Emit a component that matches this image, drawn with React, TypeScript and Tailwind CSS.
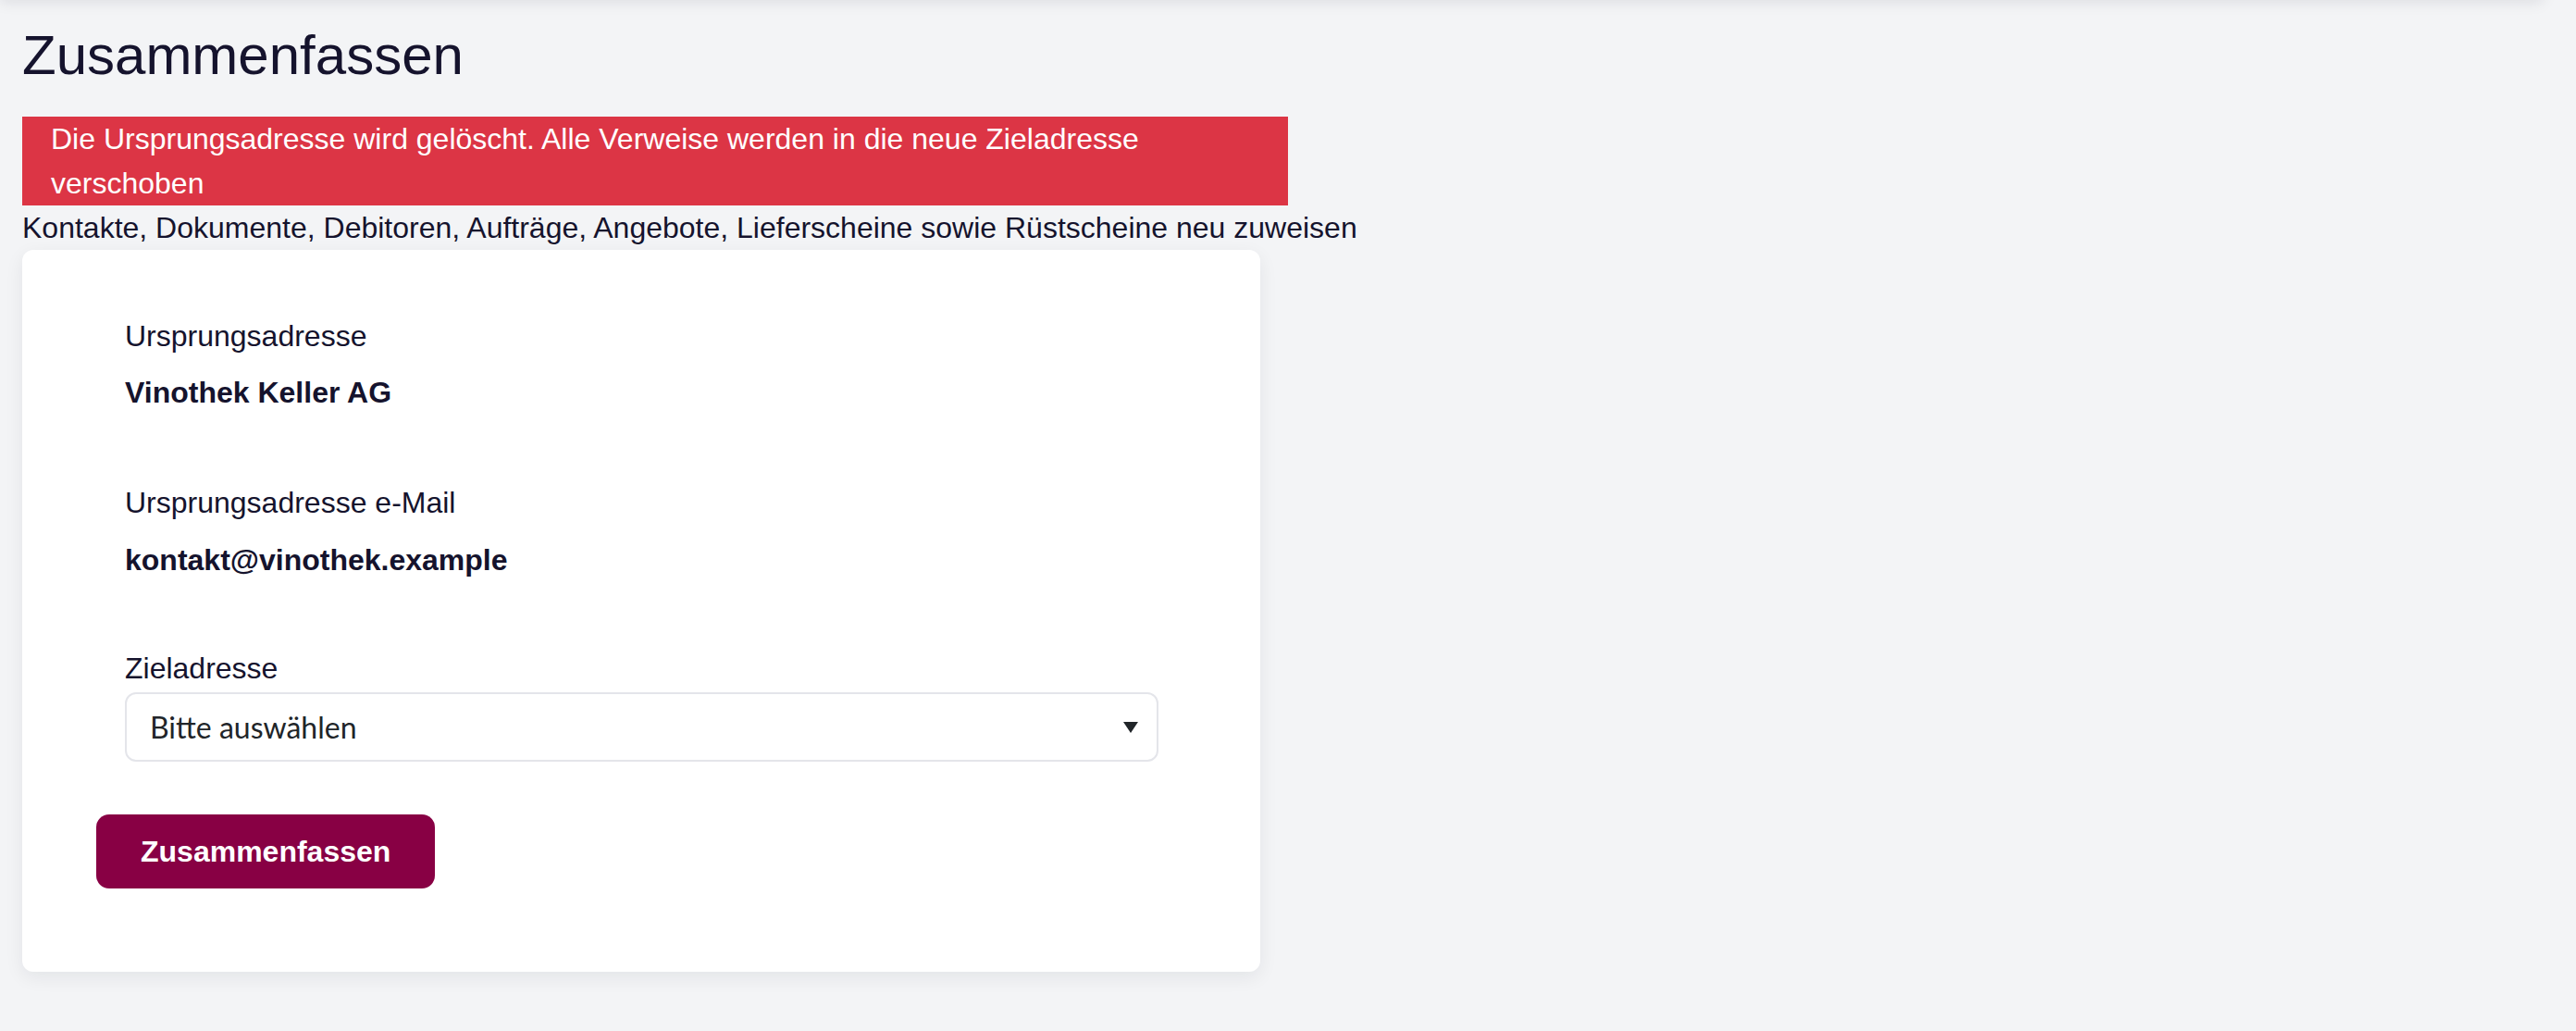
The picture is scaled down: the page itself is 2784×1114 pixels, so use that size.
export default function App() {
  return (
    <div className="relative min-h-screen overflow-hidden bg-[#f3f4f6] px-[24px] pt-[24px] font-['Liberation_Sans',Arial,sans-serif] text-[#15132d]">
      <div className="absolute left-0 right-[36px] top-[-40px] h-[40px] bg-white shadow-[0_2px_16px_rgba(15,23,42,0.10)]" />
      <h1 className="text-[60px] font-normal leading-[72px]">Zusammenfassen</h1>
      <div className="mt-[30px] w-[1368px] bg-[#dc3545] pl-[31px] pr-[30px] text-[32px] leading-[48px] text-white">
        Die Ursprungsadresse wird gelöscht. Alle Verweise werden in die neue Zieladresse verschoben
      </div>
      <p className="text-[32px] leading-[48px]">
        Kontakte, Dokumente, Debitoren, Aufträge, Angebote, Lieferscheine sowie Rüstscheine neu zuweisen
      </p>
      <div className="w-[1338px] rounded-[12px] bg-white px-[80px] pb-[90px] pt-[69px] shadow-[0_6px_20px_rgba(15,23,42,0.07)]">
        <div className="pl-[31px] pr-[30px] text-[32px] leading-[48px]">
          <div>Ursprungsadresse</div>
          <div className="mt-[13px] font-bold">Vinothek Keller AG</div>
          <div className="mt-[71px]">Ursprungsadresse e-Mail</div>
          <div className="mt-[14px] font-bold">kontakt@vinothek.example</div>
          <div className="mt-[69px]">Zieladresse</div>
          <div className="relative mt-[2px]">
            <select className="block h-[75px] w-full appearance-none rounded-[12px] border-2 border-[#e4e5ea] bg-white pl-[25px] pr-[60px] font-['Lato',sans-serif] text-[32px] text-[#212529] outline-none">
              <option>Bitte auswählen</option>
            </select>
            <svg
              className="pointer-events-none absolute right-[22px] top-[32px]"
              width="16"
              height="12"
              viewBox="0 0 16 12"
            >
              <polygon points="0,0 16,0 8,12" fill="#212529" />
            </svg>
          </div>
        </div>
        <button className="mt-[57px] rounded-[14px] bg-[#880044] px-[48px] py-[16px] text-[32px] font-bold leading-[48px] text-white">
          Zusammenfassen
        </button>
      </div>
    </div>
  );
}
